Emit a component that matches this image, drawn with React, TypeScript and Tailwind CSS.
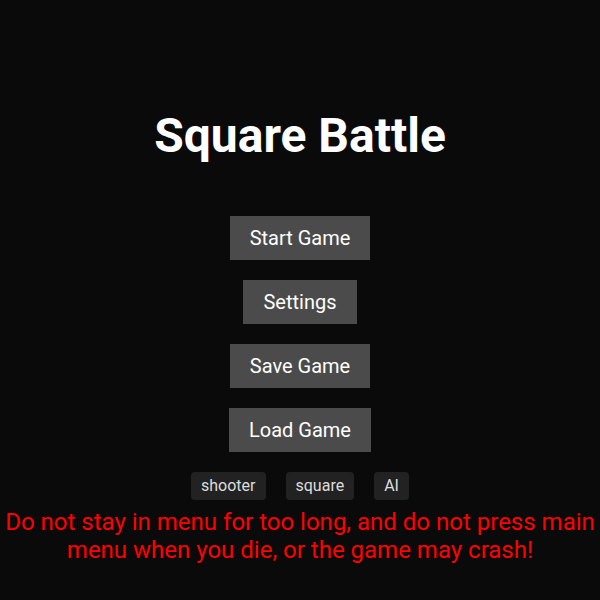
export default function App() {
  const buttons = ['Start Game', 'Settings', 'Save Game', 'Load Game']
  const tags = ['shooter', 'square', 'AI']

  return (
    <div className="min-h-screen bg-[#0b0a0b] flex flex-col items-center pt-[108px] font-['Roboto',sans-serif]">
      <h1 className="text-5xl leading-[56px] font-bold text-white">Square Battle</h1>

      <div className="mt-[52px] flex flex-col items-center gap-5">
        {buttons.map(label => (
          <button
            key={label}
            className="bg-[#4b4b4b] text-white text-xl leading-7 px-5 py-2"
          >
            {label}
          </button>
        ))}
      </div>

      <div className="mt-5 flex gap-5">
        {tags.map(tag => (
          <span key={tag} className="bg-[#222222] text-[#dddddd] text-base leading-6 px-2.5 py-0.5 rounded">
            {tag}
          </span>
        ))}
      </div>

      <p className="mt-2 text-center text-[#ff0000] text-2xl leading-7 px-1">
        Do not stay in menu for too long, and do not press main menu when you die, or the game may crash!
      </p>
    </div>
  )
}
